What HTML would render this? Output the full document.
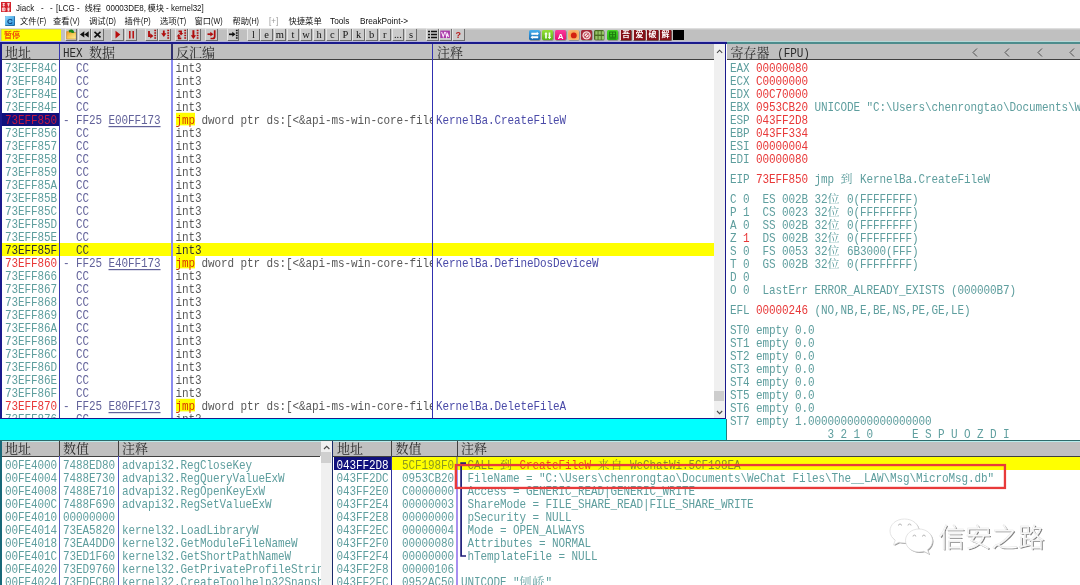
<!DOCTYPE html><html><head><meta charset="utf-8"><title>Jiack</title><style>
html,body{margin:0;padding:0;background:#fff;}
body{width:1080px;height:585px;position:relative;overflow:hidden;font-family:"Liberation Sans","Noto Sans CJK SC",sans-serif;}
#w{position:absolute;left:0;top:0;width:1080px;height:585px;overflow:hidden;will-change:transform;}
.b{position:absolute;}
.r{position:absolute;height:13px;line-height:13px;white-space:pre;font-family:"Liberation Mono","Noto Serif CJK SC",monospace;font-size:11px;letter-spacing:-0.1px;transform:translateY(1px) scaleY(1.22);transform-origin:0 50%;}
.k{display:inline-block;font-size:12px;letter-spacing:1px;transform:translateY(.6px) scaleY(.77);line-height:13px;vertical-align:baseline;}
.h{position:absolute;height:15px;line-height:15px;margin-top:1.5px;white-space:pre;font-family:"Liberation Mono","Noto Serif CJK SC",monospace;font-size:13px;color:#2a2a2a;}
.h i{font-style:normal;font-size:11px;letter-spacing:-0.1px;display:inline-block;transform:translateY(-.8px) scaleY(1.2);}
.t{position:absolute;white-space:pre;font-size:8.3px;line-height:10px;color:#000;}
.l{display:inline-block;font-size:9.2px;transform:scaleX(.87);transform-origin:0 50%;}
.btn{position:absolute;top:29px;height:11px;width:11px;background:#cacaca;border-right:1px solid #6c6c6c;border-bottom:1px solid #6c6c6c;box-shadow:-1px -1px 0 #e6e6e6;font:10.500px/12.500px "Liberation Serif",serif;overflow:hidden;text-align:center;color:#111;}
.ic{position:absolute;top:29.7px;height:10.7px;width:11.5px;box-shadow:.5px .5px 0 #666;}
u{text-decoration:underline;text-decoration-thickness:1px;text-underline-offset:1.800px;}
.j{background:linear-gradient(#ffff00,#ffff00) no-repeat 0 0/100% 10.500px;color:#d83800;}
</style></head><body><div id="w">
<svg class="b" style="left:1px;top:1.800px" width="10.200" height="10" viewBox="0 0 10.200 10"><rect width="10.200" height="10" fill="#d4222c"/><g stroke="#fbe4e4" stroke-width=".9" fill="none"><path d="M1.500 1.600h2.400M2.700 1v3.600M1.500 3.300h2.400"/><path d="M6.200 1.400h2.600M6.400 2.800h2.200M7.500 1.400v3.200"/><path d="M1.400 6h2.600v2.800h-2.600zM2.700 6v2.800"/><path d="M6.200 6.200h2.600M6.300 7.600h2.400M7.500 5.800v3.200M6.400 9h2.200"/></g></svg>
<div class="t" style="left:15.5px;top:2.5px;color:#111;font-size:8.3px;"><span class="l">Jiack</span></div>
<div class="t" style="left:41px;top:2.5px;color:#111;font-size:8.3px;"><span class="l">-</span></div>
<div class="t" style="left:50px;top:2.5px;color:#111;font-size:8.3px;"><span class="l">-</span></div>
<div class="t" style="left:56px;top:2.5px;color:#111;font-size:8.3px;"><span class="l">[LCG -</span></div>
<div class="t" style="left:84.5px;top:2.5px;color:#111;font-size:8.3px;">线程</div>
<div class="t" style="left:105.5px;top:2.5px;color:#111;font-size:8.3px;"><span class="l">00003DE8,</span></div>
<div class="t" style="left:147.5px;top:2.5px;color:#111;font-size:8.3px;">模块</div>
<div class="t" style="left:166px;top:2.5px;color:#111;font-size:8.3px;"><span class="l">- kernel32]</span></div>
<svg class="b" style="left:5px;top:16px" width="10" height="10" viewBox="0 0 10 10"><defs><linearGradient id="mg" x1="0" y1="0" x2="1" y2="1"><stop offset="0" stop-color="#8ed6f8"/><stop offset="1" stop-color="#2c94dc"/></linearGradient></defs><rect width="10" height="10" rx="1" fill="#1c5c94"/><rect width="9.300" height="9.300" rx="1" fill="url(#mg)"/><text x="5" y="8" font-size="8" font-weight="bold" text-anchor="middle" fill="#0a3a78" font-family="Liberation Sans, sans-serif">C</text></svg>
<div class="t" style="left:20px;top:16px;color:#111;font-size:8.3px;">文件<span class="l" style="transform:scaleX(0.78)">(F)</span></div>
<div class="t" style="left:53px;top:16px;color:#111;font-size:8.3px;">查看<span class="l" style="transform:scaleX(0.78)">(V)</span></div>
<div class="t" style="left:89px;top:16px;color:#111;font-size:8.3px;">调试<span class="l" style="transform:scaleX(0.78)">(D)</span></div>
<div class="t" style="left:124.5px;top:16px;color:#111;font-size:8.3px;">插件<span class="l" style="transform:scaleX(0.78)">(P)</span></div>
<div class="t" style="left:160px;top:16px;color:#111;font-size:8.3px;">选项<span class="l" style="transform:scaleX(0.78)">(T)</span></div>
<div class="t" style="left:194.5px;top:16px;color:#111;font-size:8.3px;">窗口<span class="l" style="transform:scaleX(0.78)">(W)</span></div>
<div class="t" style="left:232.5px;top:16px;color:#111;font-size:8.3px;">帮助<span class="l" style="transform:scaleX(0.78)">(H)</span></div>
<div class="t" style="left:288.5px;top:16px;color:#111;font-size:8.3px;">快捷菜单</div>
<div class="t" style="left:329.5px;top:16px;color:#111;font-size:8.3px;"><span class="l" style="transform:scaleX(0.9)">Tools</span></div>
<div class="t" style="left:359.5px;top:16px;color:#111;font-size:8.3px;"><span class="l" style="transform:scaleX(0.9)">BreakPoint-&gt;</span></div>
<div class="t" style="left:268.5px;top:16px;color:#999;font-size:8.3px;"><span class="l">[+]</span></div>
<div class="b" style="left:0px;top:28px;width:1080px;height:14.5px;background:linear-gradient(#e8e8e8,#c0c0c0 2px,#c0c0c0);"></div>
<div class="b" style="left:1px;top:29.3px;width:60px;height:12.7px;background:#ffff00;box-shadow:inset .6px .6px 0 #c8c860;"></div>
<div class="t" style="left:4px;top:30.700px;color:#f05008;font-size:8px;font-weight:bold;letter-spacing:0">暂停</div>
<div class="btn" style="left:65.5px;width:10.5px;color:#111;"><svg width="11" height="11" viewBox="0 0 11 11" style="position:absolute;left:0;top:0"><defs><linearGradient id="fg" x1="0" y1="0" x2="1" y2="1"><stop offset="0" stop-color="#f09a20"/><stop offset=".55" stop-color="#f6d060"/><stop offset="1" stop-color="#fbf0a0"/></linearGradient></defs><path d="M.6 2.600h3.400l1 1h5.200v6.400H.6z" fill="url(#fg)" stroke="#c08020" stroke-width=".5"/><path d="M2.600 1.600c1.600-1.800 4.600-1.600 5.200.6l.6 1.600-2.400.2-1-.8-1.800.2z" fill="#188418"/></svg></div>
<div class="btn" style="left:79px;width:10.5px;color:#111;"><svg width="11" height="11" viewBox="0 0 11 11" style="position:absolute;left:0;top:0"><path d="M5.300 2.200v6.400L.9 5.400zM9.700 2.200v6.400L5.300 5.400z" fill="#111"/></svg></div>
<div class="btn" style="left:92px;width:10.5px;color:#111;"><svg width="11" height="11" viewBox="0 0 11 11" style="position:absolute;left:0;top:0"><path d="M2.500 2.800l6 5.600M8.500 2.800l-6 5.600" stroke="#111" stroke-width="1.600"/></svg></div>
<div class="btn" style="left:112px;width:10.5px;color:#111;"><svg width="11" height="11" viewBox="0 0 11 11" style="position:absolute;left:0;top:0"><path d="M3.500 1.800v7.600L8.300 5.600z" fill="#b80c0c"/></svg></div>
<div class="btn" style="left:125.5px;width:10.5px;color:#111;"><svg width="11" height="11" viewBox="0 0 11 11" style="position:absolute;left:0;top:0"><path d="M3.800 2v7.400M7.200 2v7.400" stroke="#b80c0c" stroke-width="1.500"/></svg></div>
<div class="btn" style="left:146px;width:10.5px;color:#111;"><svg width="11" height="11" viewBox="0 0 11 11" style="position:absolute;left:0;top:0"><path d="M9.200 .8v10" stroke="#b00c0c" stroke-width="1.800" stroke-dasharray="1.500 1"/><path d="M3 2v5h1.500" stroke="#b00c0c" stroke-width="1.800" fill="none"/><path d="M4.200 4.300l3.200 2.600-3.200 2.600z" fill="#b00c0c"/></svg></div>
<div class="btn" style="left:159px;width:10.5px;color:#111;"><svg width="11" height="11" viewBox="0 0 11 11" style="position:absolute;left:0;top:0"><path d="M9.200 .8v10" stroke="#b00c0c" stroke-width="1.800" stroke-dasharray="1.500 1"/><path d="M4.800 1.500v4" stroke="#b00c0c" stroke-width="1.800"/><path d="M2.200 4.300h5.200L4.800 8z" fill="#b00c0c"/></svg></div>
<div class="btn" style="left:176px;width:10.5px;color:#111;"><svg width="11" height="11" viewBox="0 0 11 11" style="position:absolute;left:0;top:0"><path d="M9.200 .8v10" stroke="#b00c0c" stroke-width="1.800" stroke-dasharray="1.500 1"/><path d="M2.500 2.300h2.600v2.200M5.300 9.300h-2.600v-2" stroke="#b00c0c" stroke-width="1.700" fill="none"/><path d="M3 4h4.200L5.100 6.600z" fill="#b00c0c"/><path d="M.6 7.600h4.200L2.700 5z" fill="#b00c0c"/></svg></div>
<div class="btn" style="left:189.2px;width:10.5px;color:#111;"><svg width="11" height="11" viewBox="0 0 11 11" style="position:absolute;left:0;top:0"><path d="M8.600 .8v10" stroke="#b00c0c" stroke-width="1.800" stroke-dasharray="1.500 1"/><path d="M4.400 1.200v6.500" stroke="#b00c0c" stroke-width="2"/><path d="M1.800 6.300h5.200L4.400 10z" fill="#b00c0c"/></svg></div>
<div class="btn" style="left:206px;width:10.5px;color:#111;"><svg width="11" height="11" viewBox="0 0 11 11" style="position:absolute;left:0;top:0"><path d="M8.700 1.200v6.300q0 2-2 2h-2.200" stroke="#b00c0c" stroke-width="1.700" fill="none"/><path d="M1.500 5.200h3.500" stroke="#b00c0c" stroke-width="1.700"/><path d="M4.300 2.800l3.200 2.400-3.200 2.400z" fill="#b00c0c"/></svg></div>
<div class="btn" style="left:227.7px;width:10.5px;color:#111;"><svg width="11" height="11" viewBox="0 0 11 11" style="position:absolute;left:0;top:0"><path d="M8.800 .8v10" stroke="#111" stroke-width="1.800" stroke-dasharray="1.500 1"/><path d="M1 5.300h4" stroke="#111" stroke-width="1.700"/><path d="M4.300 2.800l3.200 2.500-3.200 2.500z" fill="#111"/></svg></div>
<div class="btn" style="left:248.3px;width:10.5px;color:#111;">l</div>
<div class="btn" style="left:261.42px;width:10.5px;color:#111;">e</div>
<div class="btn" style="left:274.54px;width:10.5px;color:#111;">m</div>
<div class="btn" style="left:287.66px;width:10.5px;color:#111;">t</div>
<div class="btn" style="left:300.78000000000003px;width:10.5px;color:#111;">w</div>
<div class="btn" style="left:313.9px;width:10.5px;color:#111;">h</div>
<div class="btn" style="left:327.02px;width:10.5px;color:#111;">c</div>
<div class="btn" style="left:340.14px;width:10.5px;color:#111;">P</div>
<div class="btn" style="left:353.26px;width:10.5px;color:#111;">k</div>
<div class="btn" style="left:366.38px;width:10.5px;color:#111;">b</div>
<div class="btn" style="left:379.5px;width:10.5px;color:#111;">r</div>
<div class="btn" style="left:392.62px;width:10.5px;color:#111;">...</div>
<div class="btn" style="left:405.74px;width:10.5px;color:#111;">s</div>
<div class="btn" style="left:427px;width:10.5px;color:#111;"><svg width="11" height="11" viewBox="0 0 11 11" style="position:absolute;left:0;top:0"><path d="M1 2.500h2M1 5.500h2M1 8.500h2" stroke="#111" stroke-width="1.600"/><path d="M4 2.500h6M4 5.500h6M4 8.500h6" stroke="#111" stroke-width="1.400"/></svg></div>
<div class="btn" style="left:440px;width:10.5px;color:#111;"><svg width="11" height="11" viewBox="0 0 11 11" style="position:absolute;left:0;top:0"><rect x=".3" y="1.600" width="9.600" height="7.400" fill="#a838a8"/><path d="M1.600 2.800l1.600 5L4.800 2.800M5.600 2.800l1 5 1-3 1 3" stroke="#fbe8fb" stroke-width="1.100" fill="none"/></svg></div>
<div class="btn" style="left:453px;width:10.5px;color:#b81818;font:bold 9px/13px 'Liberation Sans',sans-serif;">?</div>
<div class="ic" style="left:528.5px;width:11.2px;background:linear-gradient(#48b0f0,#1468b0);border-radius:1.5px;"><svg width="11.500" height="11" viewBox="0 0 11.500 11" style="position:absolute;left:0;top:0"><path d="M2.300 3.700h6M3.200 7.300h6" stroke="#fff" stroke-width="1.900"/><path d="M7.800 1.800l2.200 1.900-2.200 1.900zM3.700 5.400L1.500 7.300l2.200 1.900z" fill="#fff"/></svg></div>
<div class="ic" style="left:541.5px;width:11.2px;background:linear-gradient(#98e038,#58b414);border-radius:1.5px;"><svg width="11.500" height="11" viewBox="0 0 11.500 11" style="position:absolute;left:0;top:0"><path d="M4 3v5.500M7.500 2.500v5.500" stroke="#f4fff0" stroke-width="1.700"/><path d="M2.300 4.200L4 2l1.700 2.200zM5.800 7L7.500 9.200 9.200 7z" fill="#f4fff0"/></svg></div>
<div class="ic" style="left:554.7px;width:11.2px;background:linear-gradient(#fa3c9c,#e40c74);border-radius:1.5px;"><svg width="11.500" height="11" viewBox="0 0 11.500 11" style="position:absolute;left:0;top:0"><text x="5.600" y="8.600" font-size="8" font-weight="bold" text-anchor="middle" fill="#fff" font-family="Liberation Sans, sans-serif">A</text></svg></div>
<div class="ic" style="left:567.7px;width:11.6px;background:radial-gradient(#f49030,#f8c488);border-radius:1.5px;"><svg width="11.500" height="11" viewBox="0 0 11.500 11" style="position:absolute;left:0;top:0"><circle cx="5.800" cy="5.400" r="2.900" fill="#d42010"/></svg></div>
<div class="ic" style="left:581px;width:11.2px;background:#a42838;border-radius:1.5px;"><svg width="11.500" height="11" viewBox="0 0 11.500 11" style="position:absolute;left:0;top:0"><circle cx="5.600" cy="5.400" r="4.200" fill="#f6dcdc"/><circle cx="5.600" cy="5.400" r="2.500" fill="none" stroke="#b83040" stroke-width=".8"/><path d="M3.900 7.100l3.400-3.400" stroke="#b83040" stroke-width=".8"/></svg></div>
<div class="ic" style="left:593.5px;width:10.8px;background:#4a6a22;border-radius:1.5px;"><svg width="11.500" height="11" viewBox="0 0 11.500 11" style="position:absolute;left:0;top:0"><g fill="#96c468"><rect x="1.300" y="1.200" width="2.300" height="3.400"/><rect x="4.500" y="1.200" width="2.300" height="3.400"/><rect x="7.700" y="1.200" width="2.300" height="3.400"/><rect x="1.300" y="6" width="2.300" height="3.600"/><rect x="4.500" y="6" width="2.300" height="3.600"/><rect x="7.700" y="6" width="2.300" height="3.600"/></g></svg></div>
<div class="ic" style="left:606.8px;width:11px;background:linear-gradient(#48d828,#28b414);border-radius:1.5px;"><svg width="11.500" height="11" viewBox="0 0 11.500 11" style="position:absolute;left:0;top:0"><rect x="2.600" y="2" width="6" height="5.200" fill="none" stroke="#1c7410" stroke-width="1"/><path d="M5.600 2v5.200M2.600 4.600h6M2.300 8.800h6.600" stroke="#1c7410" stroke-width=".9"/></svg></div>
<div class="ic" style="left:619.6px;width:10.600px;background:#861018;border-left:1px solid #f0d8d8;color:#fff;font:bold 8px/10.700px 'Liberation Sans','Noto Sans CJK SC',sans-serif;text-align:center;overflow:hidden;box-shadow:.6px .6px 0 #400808;">吾</div>
<div class="ic" style="left:633.1px;width:10.600px;background:#861018;border-left:1px solid #f0d8d8;color:#fff;font:bold 8px/10.700px 'Liberation Sans','Noto Sans CJK SC',sans-serif;text-align:center;overflow:hidden;box-shadow:.6px .6px 0 #400808;">爱</div>
<div class="ic" style="left:646.2px;width:10.600px;background:#861018;border-left:1px solid #f0d8d8;color:#fff;font:bold 8px/10.700px 'Liberation Sans','Noto Sans CJK SC',sans-serif;text-align:center;overflow:hidden;box-shadow:.6px .6px 0 #400808;">破</div>
<div class="ic" style="left:659.2px;width:10.600px;background:#861018;border-left:1px solid #f0d8d8;color:#fff;font:bold 8px/10.700px 'Liberation Sans','Noto Sans CJK SC',sans-serif;text-align:center;overflow:hidden;box-shadow:.6px .6px 0 #400808;">解</div>
<div class="ic" style="left:673.100px;width:10.800px;background:#000;box-shadow:none"></div>
<div class="b" style="left:0px;top:41.3px;width:726px;height:1px;background:#b4b4dc;"></div>
<div class="b" style="left:0px;top:42.1px;width:726.5px;height:1.9px;background:#1a1a8c;"></div>
<div class="b" style="left:0px;top:42.5px;width:2px;height:400px;background:#1a1a8c;"></div>
<div class="b" style="left:2px;top:44px;width:712px;height:15px;background:#c0c0c0;"></div>
<div class="b" style="left:2px;top:58.5px;width:712px;height:1.5px;background:#404040;"></div>
<div class="h" style="left:5px;top:44px">地址</div>
<div class="h" style="left:63px;top:44px"><i>HEX </i>数据</div>
<div class="h" style="left:176px;top:44px">反汇编</div>
<div class="h" style="left:437px;top:44px">注释</div>
<div class="b" style="left:714px;top:44px;width:11px;height:374.5px;background:#f0f0f0;"></div>
<div class="b" style="left:714px;top:44px;width:11px;height:15px;background:#f0f0f0;"></div>
<svg class="b" style="left:714px;top:44px" width="11" height="15" viewBox="0 0 11 15"><path d="M3 8.800L5.600 6.200 8.200 8.800" stroke="#484848" stroke-width="1.100" fill="none"/></svg>
<svg class="b" style="left:714px;top:405px" width="11" height="13" viewBox="0 0 11 13"><path d="M3 6L5.600 8.600 8.200 6" stroke="#484848" stroke-width="1.100" fill="none"/></svg>
<div class="b" style="left:714.3px;top:391.2px;width:9.8px;height:10.3px;background:#cdcdcd;"></div>
<div class="b" style="left:724.6px;top:42.5px;width:1.8px;height:376px;background:#1a1a8c;"></div>
<div class="b" style="left:2px;top:60px;width:712px;height:358.500px;overflow:hidden">
<div class="r" style="left:3px;top:1px;color:#5e9e9e;">73EFF84C</div>
<div class="r" style="left:61px;top:1px;color:#62629a;">  CC</div>
<div class="r" style="left:173.5px;top:1px;color:#585858;">int3</div>
<div class="r" style="left:3px;top:14px;color:#5e9e9e;">73EFF84D</div>
<div class="r" style="left:61px;top:14px;color:#62629a;">  CC</div>
<div class="r" style="left:173.5px;top:14px;color:#585858;">int3</div>
<div class="r" style="left:3px;top:27px;color:#5e9e9e;">73EFF84E</div>
<div class="r" style="left:61px;top:27px;color:#62629a;">  CC</div>
<div class="r" style="left:173.5px;top:27px;color:#585858;">int3</div>
<div class="r" style="left:3px;top:40px;color:#5e9e9e;">73EFF84F</div>
<div class="r" style="left:61px;top:40px;color:#62629a;">  CC</div>
<div class="r" style="left:173.5px;top:40px;color:#585858;">int3</div>
<div class="b" style="left:0;top:53px;width:57px;height:13px;background:#10107c"></div>
<div class="r" style="left:3px;top:53px;color:#c01840;">73EFF850</div>
<div class="r" style="left:61px;top:53px;color:#62629a;">- FF25 <u>E00FF173</u></div>
<div class="r" style="left:173.5px;top:53px;color:#585858;width:256px;overflow:hidden;"><span class="j">jmp</span> dword ptr ds:[&lt;&amp;api-ms-win-core-file</div>
<div class="r" style="left:434px;top:53px;color:#4a4aa8;">KernelBa.CreateFileW</div>
<div class="r" style="left:3px;top:66px;color:#5e9e9e;">73EFF856</div>
<div class="r" style="left:61px;top:66px;color:#62629a;">  CC</div>
<div class="r" style="left:173.5px;top:66px;color:#585858;">int3</div>
<div class="r" style="left:3px;top:79px;color:#5e9e9e;">73EFF857</div>
<div class="r" style="left:61px;top:79px;color:#62629a;">  CC</div>
<div class="r" style="left:173.5px;top:79px;color:#585858;">int3</div>
<div class="r" style="left:3px;top:92px;color:#5e9e9e;">73EFF858</div>
<div class="r" style="left:61px;top:92px;color:#62629a;">  CC</div>
<div class="r" style="left:173.5px;top:92px;color:#585858;">int3</div>
<div class="r" style="left:3px;top:105px;color:#5e9e9e;">73EFF859</div>
<div class="r" style="left:61px;top:105px;color:#62629a;">  CC</div>
<div class="r" style="left:173.5px;top:105px;color:#585858;">int3</div>
<div class="r" style="left:3px;top:118px;color:#5e9e9e;">73EFF85A</div>
<div class="r" style="left:61px;top:118px;color:#62629a;">  CC</div>
<div class="r" style="left:173.5px;top:118px;color:#585858;">int3</div>
<div class="r" style="left:3px;top:131px;color:#5e9e9e;">73EFF85B</div>
<div class="r" style="left:61px;top:131px;color:#62629a;">  CC</div>
<div class="r" style="left:173.5px;top:131px;color:#585858;">int3</div>
<div class="r" style="left:3px;top:144px;color:#5e9e9e;">73EFF85C</div>
<div class="r" style="left:61px;top:144px;color:#62629a;">  CC</div>
<div class="r" style="left:173.5px;top:144px;color:#585858;">int3</div>
<div class="r" style="left:3px;top:157px;color:#5e9e9e;">73EFF85D</div>
<div class="r" style="left:61px;top:157px;color:#62629a;">  CC</div>
<div class="r" style="left:173.5px;top:157px;color:#585858;">int3</div>
<div class="r" style="left:3px;top:170px;color:#5e9e9e;">73EFF85E</div>
<div class="r" style="left:61px;top:170px;color:#62629a;">  CC</div>
<div class="r" style="left:173.5px;top:170px;color:#585858;">int3</div>
<div class="b" style="left:0;top:183px;width:712px;height:13px;background:#ffff00"></div>
<div class="r" style="left:3px;top:183px;color:#303030;">73EFF85F</div>
<div class="r" style="left:61px;top:183px;color:#404040;">  CC</div>
<div class="r" style="left:173.5px;top:183px;color:#303030;">int3</div>
<div class="r" style="left:3px;top:196px;color:#e83838;">73EFF860</div>
<div class="r" style="left:61px;top:196px;color:#62629a;">- FF25 <u>E40FF173</u></div>
<div class="r" style="left:173.5px;top:196px;color:#585858;width:256px;overflow:hidden;"><span class="j">jmp</span> dword ptr ds:[&lt;&amp;api-ms-win-core-file</div>
<div class="r" style="left:434px;top:196px;color:#4a4aa8;">KernelBa.DefineDosDeviceW</div>
<div class="r" style="left:3px;top:209px;color:#5e9e9e;">73EFF866</div>
<div class="r" style="left:61px;top:209px;color:#62629a;">  CC</div>
<div class="r" style="left:173.5px;top:209px;color:#585858;">int3</div>
<div class="r" style="left:3px;top:222px;color:#5e9e9e;">73EFF867</div>
<div class="r" style="left:61px;top:222px;color:#62629a;">  CC</div>
<div class="r" style="left:173.5px;top:222px;color:#585858;">int3</div>
<div class="r" style="left:3px;top:235px;color:#5e9e9e;">73EFF868</div>
<div class="r" style="left:61px;top:235px;color:#62629a;">  CC</div>
<div class="r" style="left:173.5px;top:235px;color:#585858;">int3</div>
<div class="r" style="left:3px;top:248px;color:#5e9e9e;">73EFF869</div>
<div class="r" style="left:61px;top:248px;color:#62629a;">  CC</div>
<div class="r" style="left:173.5px;top:248px;color:#585858;">int3</div>
<div class="r" style="left:3px;top:261px;color:#5e9e9e;">73EFF86A</div>
<div class="r" style="left:61px;top:261px;color:#62629a;">  CC</div>
<div class="r" style="left:173.5px;top:261px;color:#585858;">int3</div>
<div class="r" style="left:3px;top:274px;color:#5e9e9e;">73EFF86B</div>
<div class="r" style="left:61px;top:274px;color:#62629a;">  CC</div>
<div class="r" style="left:173.5px;top:274px;color:#585858;">int3</div>
<div class="r" style="left:3px;top:287px;color:#5e9e9e;">73EFF86C</div>
<div class="r" style="left:61px;top:287px;color:#62629a;">  CC</div>
<div class="r" style="left:173.5px;top:287px;color:#585858;">int3</div>
<div class="r" style="left:3px;top:300px;color:#5e9e9e;">73EFF86D</div>
<div class="r" style="left:61px;top:300px;color:#62629a;">  CC</div>
<div class="r" style="left:173.5px;top:300px;color:#585858;">int3</div>
<div class="r" style="left:3px;top:313px;color:#5e9e9e;">73EFF86E</div>
<div class="r" style="left:61px;top:313px;color:#62629a;">  CC</div>
<div class="r" style="left:173.5px;top:313px;color:#585858;">int3</div>
<div class="r" style="left:3px;top:326px;color:#5e9e9e;">73EFF86F</div>
<div class="r" style="left:61px;top:326px;color:#62629a;">  CC</div>
<div class="r" style="left:173.5px;top:326px;color:#585858;">int3</div>
<div class="r" style="left:3px;top:339px;color:#e83838;">73EFF870</div>
<div class="r" style="left:61px;top:339px;color:#62629a;">- FF25 <u>E80FF173</u></div>
<div class="r" style="left:173.5px;top:339px;color:#585858;width:256px;overflow:hidden;"><span class="j">jmp</span> dword ptr ds:[&lt;&amp;api-ms-win-core-file</div>
<div class="r" style="left:434px;top:339px;color:#4a4aa8;">KernelBa.DeleteFileA</div>
<div class="r" style="left:3px;top:352px;color:#5e9e9e;">73EFF876</div>
<div class="r" style="left:61px;top:352px;color:#62629a;">  CC</div>
<div class="r" style="left:173.5px;top:352px;color:#585858;">int3</div>
</div>
<div class="b" style="left:59px;top:44px;width:1px;height:374.5px;background:#3838b0;"></div>
<div class="b" style="left:171px;top:60px;width:1.5px;height:358.5px;background:#8c8cf0;"></div>
<div class="b" style="left:171px;top:44px;width:1.5px;height:16px;background:#303070;"></div>
<div class="b" style="left:432px;top:44px;width:1px;height:374.5px;background:#3030b0;"></div>
<div class="b" style="left:0px;top:418.2px;width:726px;height:1.3px;background:#1a1a8c;"></div>
<div class="b" style="left:0px;top:419.3px;width:725.5px;height:21px;background:#00ffff;"></div>
<div class="b" style="left:725.5px;top:419.3px;width:0.7px;height:21px;background:#208080;"></div>
<div class="b" style="left:726.5px;top:41.2px;width:353.5px;height:1px;background:#b4d8d8;"></div>
<div class="b" style="left:726.5px;top:42.2px;width:353.5px;height:2px;background:#4c8c8c;"></div>
<div class="b" style="left:726.5px;top:44.2px;width:353.5px;height:1px;background:#b4cccc;"></div>
<div class="b" style="left:727px;top:44px;width:353px;height:15px;background:#c0c0c0;"></div>
<div class="b" style="left:727px;top:58.5px;width:353px;height:1.5px;background:#404040;"></div>
<div class="h" style="left:730.5px;top:44px">寄存器 <i>(FPU)</i></div>
<svg class="b" style="left:970.5px;top:47px" width="8" height="11" viewBox="0 0 8 11"><path d="M6 1.500L2 5.500 6 9.500" stroke="#505050" stroke-width="1" fill="none"/></svg>
<svg class="b" style="left:1003px;top:47px" width="8" height="11" viewBox="0 0 8 11"><path d="M6 1.500L2 5.500 6 9.500" stroke="#505050" stroke-width="1" fill="none"/></svg>
<svg class="b" style="left:1035.5px;top:47px" width="8" height="11" viewBox="0 0 8 11"><path d="M6 1.500L2 5.500 6 9.500" stroke="#505050" stroke-width="1" fill="none"/></svg>
<svg class="b" style="left:1068px;top:47px" width="8" height="11" viewBox="0 0 8 11"><path d="M6 1.500L2 5.500 6 9.500" stroke="#505050" stroke-width="1" fill="none"/></svg>
<div class="b" style="left:0;top:0;width:1080px;height:440px;overflow:hidden">
<div class="r" style="left:730px;top:61px;"><span style="color:#5e9e9e">EAX </span><span style="color:#e83838">00000080</span><span style="color:#5e9e9e"></span></div>
<div class="r" style="left:730px;top:74px;"><span style="color:#5e9e9e">ECX </span><span style="color:#e83838">C0000000</span><span style="color:#5e9e9e"></span></div>
<div class="r" style="left:730px;top:87px;"><span style="color:#5e9e9e">EDX </span><span style="color:#e83838">00C70000</span><span style="color:#5e9e9e"></span></div>
<div class="r" style="left:730px;top:100px;"><span style="color:#5e9e9e">EBX </span><span style="color:#e83838">0953CB20</span><span style="color:#5e9e9e"> UNICODE "C:\Users\chenrongtao\Documents\W</span></div>
<div class="r" style="left:730px;top:113px;"><span style="color:#5e9e9e">ESP </span><span style="color:#e83838">043FF2D8</span><span style="color:#5e9e9e"></span></div>
<div class="r" style="left:730px;top:126px;"><span style="color:#5e9e9e">EBP </span><span style="color:#e83838">043FF334</span><span style="color:#5e9e9e"></span></div>
<div class="r" style="left:730px;top:139px;"><span style="color:#5e9e9e">ESI </span><span style="color:#e83838">00000004</span><span style="color:#5e9e9e"></span></div>
<div class="r" style="left:730px;top:152px;"><span style="color:#5e9e9e">EDI </span><span style="color:#e83838">00000080</span><span style="color:#5e9e9e"></span></div>
<div class="r" style="left:730px;top:172px;"><span style="color:#5e9e9e">EIP </span><span style="color:#e83838">73EFF850</span><span style="color:#5e9e9e"> jmp <span class="k">到</span> KernelBa.CreateFileW</span></div>
<div class="r" style="left:730px;top:192px;"><span style="color:#5e9e9e">C </span><span style="color:#5e9e9e">0</span><span style="color:#5e9e9e">  ES 002B 32<span class="k">位</span> 0(FFFFFFFF)</span></div>
<div class="r" style="left:730px;top:205px;"><span style="color:#5e9e9e">P </span><span style="color:#5e9e9e">1</span><span style="color:#5e9e9e">  CS 0023 32<span class="k">位</span> 0(FFFFFFFF)</span></div>
<div class="r" style="left:730px;top:218px;"><span style="color:#5e9e9e">A </span><span style="color:#5e9e9e">0</span><span style="color:#5e9e9e">  SS 002B 32<span class="k">位</span> 0(FFFFFFFF)</span></div>
<div class="r" style="left:730px;top:231px;"><span style="color:#5e9e9e">Z </span><span style="color:#e83838">1</span><span style="color:#5e9e9e">  DS 002B 32<span class="k">位</span> 0(FFFFFFFF)</span></div>
<div class="r" style="left:730px;top:244px;"><span style="color:#5e9e9e">S </span><span style="color:#5e9e9e">0</span><span style="color:#5e9e9e">  FS 0053 32<span class="k">位</span> 6B3000(FFF)</span></div>
<div class="r" style="left:730px;top:257px;"><span style="color:#5e9e9e">T </span><span style="color:#5e9e9e">0</span><span style="color:#5e9e9e">  GS 002B 32<span class="k">位</span> 0(FFFFFFFF)</span></div>
<div class="r" style="left:730px;top:270px;"><span style="color:#5e9e9e">D </span><span style="color:#5e9e9e">0</span></div>
<div class="r" style="left:730px;top:283px;"><span style="color:#5e9e9e">O </span><span style="color:#5e9e9e">0</span><span style="color:#5e9e9e">  LastErr ERROR_ALREADY_EXISTS (000000B7)</span></div>
<div class="r" style="left:730px;top:303px;"><span style="color:#5e9e9e">EFL </span><span style="color:#e83838">00000246</span><span style="color:#5e9e9e"> (NO,NB,E,BE,NS,PE,GE,LE)</span></div>
<div class="r" style="left:730px;top:323px;"><span style="color:#5e9e9e">ST0 empty 0.0</span></div>
<div class="r" style="left:730px;top:336px;"><span style="color:#5e9e9e">ST1 empty 0.0</span></div>
<div class="r" style="left:730px;top:349px;"><span style="color:#5e9e9e">ST2 empty 0.0</span></div>
<div class="r" style="left:730px;top:362px;"><span style="color:#5e9e9e">ST3 empty 0.0</span></div>
<div class="r" style="left:730px;top:375px;"><span style="color:#5e9e9e">ST4 empty 0.0</span></div>
<div class="r" style="left:730px;top:388px;"><span style="color:#5e9e9e">ST5 empty 0.0</span></div>
<div class="r" style="left:730px;top:401px;"><span style="color:#5e9e9e">ST6 empty 0.0</span></div>
<div class="r" style="left:730px;top:414px;"><span style="color:#5e9e9e">ST7 empty 1.0000000000000000000</span></div>
<div class="r" style="left:730px;top:427px;"><span style="color:#5e9e9e">               3 2 1 0      E S P U O Z D I</span></div>
</div>
<div class="b" style="left:0px;top:439.7px;width:1080px;height:1.3px;background:#2c6c6c;"></div>
<div class="b" style="left:0px;top:441px;width:1080px;height:15px;background:#c0c0c0;"></div>
<div class="b" style="left:0px;top:441px;width:1080px;height:0.8px;background:#b8ecec;"></div>
<div class="b" style="left:0px;top:455.5px;width:320px;height:1.5px;background:#404040;"></div>
<div class="b" style="left:333px;top:455.5px;width:747px;height:1.5px;background:#404040;"></div>
<div class="b" style="left:0px;top:441px;width:1.7px;height:145px;background:#186878;"></div>
<div class="b" style="left:59px;top:440.5px;width:1px;height:145px;background:#5858c8;"></div>
<div class="b" style="left:118px;top:440.5px;width:1.3px;height:145px;background:#5050c0;"></div>
<div class="b" style="left:59px;top:441px;width:1.2px;height:15px;background:#404040;"></div>
<div class="b" style="left:118px;top:441px;width:1.2px;height:15px;background:#404040;"></div>
<div class="h" style="left:5px;top:440.5px">地址</div>
<div class="h" style="left:63px;top:440.5px">数值</div>
<div class="h" style="left:122px;top:440.5px">注释</div>
<div class="b" style="left:320.5px;top:440.5px;width:11.5px;height:145px;background:#f0f0f0;"></div>
<svg class="b" style="left:320.500px;top:440.5px" width="11" height="12" viewBox="0 0 11 12"><path d="M3 8L5.700 5.300 8.400 8" stroke="#484848" stroke-width="1.100" fill="none"/></svg>
<div class="b" style="left:321.1px;top:452.2px;width:10px;height:10.5px;background:#d0d0d0;"></div>
<div class="b" style="left:0;top:0;width:320.500px;height:585px;overflow:hidden">
<div class="r " style="left:5px;top:457.7px;color:#5e9e9e;">00FE4000</div>
<div class="r " style="left:63px;top:457.7px;color:#5e9e9e;">7488ED80</div>
<div class="r " style="left:122px;top:457.7px;color:#5e9e9e;">advapi32.RegCloseKey</div>
<div class="r " style="left:5px;top:470.7px;color:#5e9e9e;">00FE4004</div>
<div class="r " style="left:63px;top:470.7px;color:#5e9e9e;">7488E730</div>
<div class="r " style="left:122px;top:470.7px;color:#5e9e9e;">advapi32.RegQueryValueExW</div>
<div class="r " style="left:5px;top:483.7px;color:#5e9e9e;">00FE4008</div>
<div class="r " style="left:63px;top:483.7px;color:#5e9e9e;">7488E710</div>
<div class="r " style="left:122px;top:483.7px;color:#5e9e9e;">advapi32.RegOpenKeyExW</div>
<div class="r " style="left:5px;top:496.7px;color:#5e9e9e;">00FE400C</div>
<div class="r " style="left:63px;top:496.7px;color:#5e9e9e;">7488F690</div>
<div class="r " style="left:122px;top:496.7px;color:#5e9e9e;">advapi32.RegSetValueExW</div>
<div class="r " style="left:5px;top:509.7px;color:#5e9e9e;">00FE4010</div>
<div class="r " style="left:63px;top:509.7px;color:#5e9e9e;">00000000</div>
<div class="r " style="left:5px;top:522.7px;color:#5e9e9e;">00FE4014</div>
<div class="r " style="left:63px;top:522.7px;color:#5e9e9e;">73EA5820</div>
<div class="r " style="left:122px;top:522.7px;color:#5e9e9e;">kernel32.LoadLibraryW</div>
<div class="r " style="left:5px;top:535.7px;color:#5e9e9e;">00FE4018</div>
<div class="r " style="left:63px;top:535.7px;color:#5e9e9e;">73EA4DD0</div>
<div class="r " style="left:122px;top:535.7px;color:#5e9e9e;">kernel32.GetModuleFileNameW</div>
<div class="r " style="left:5px;top:548.7px;color:#5e9e9e;">00FE401C</div>
<div class="r " style="left:63px;top:548.7px;color:#5e9e9e;">73ED1F60</div>
<div class="r " style="left:122px;top:548.7px;color:#5e9e9e;">kernel32.GetShortPathNameW</div>
<div class="r " style="left:5px;top:561.7px;color:#5e9e9e;">00FE4020</div>
<div class="r " style="left:63px;top:561.7px;color:#5e9e9e;">73ED9760</div>
<div class="r " style="left:122px;top:561.7px;color:#5e9e9e;">kernel32.GetPrivateProfileStringW</div>
<div class="r " style="left:5px;top:574.7px;color:#5e9e9e;">00FE4024</div>
<div class="r " style="left:63px;top:574.7px;color:#5e9e9e;">73EDFCB0</div>
<div class="r " style="left:122px;top:574.7px;color:#5e9e9e;">kernel32.CreateToolhelp32Snapshot</div>
</div>
<div class="b" style="left:332px;top:441px;width:1.2px;height:145px;background:#182868;"></div>
<div class="b" style="left:391px;top:440.5px;width:1px;height:145px;background:#3030a0;"></div>
<div class="b" style="left:456.4px;top:456.5px;width:1.5px;height:129px;background:#a890f0;"></div>
<div class="b" style="left:391px;top:441px;width:1.2px;height:15px;background:#404040;"></div>
<div class="b" style="left:456.5px;top:441px;width:1.2px;height:15px;background:#404040;"></div>
<div class="h" style="left:337px;top:440.5px">地址</div>
<div class="h" style="left:395.5px;top:440.5px">数值</div>
<div class="h" style="left:461px;top:440.5px">注释</div>
<div class="b" style="left:333.5px;top:457px;width:57.5px;height:13px;background:#10107c;"></div>
<div class="b" style="left:392px;top:457px;width:688px;height:13px;background:#ffff00;"></div>
<div class="b" style="left:456.4px;top:457px;width:1.5px;height:13px;background:#a8a860;"></div>
<div class="r " style="left:336.5px;top:457.7px;color:#ffffff;">043FF2D8</div>
<div class="r " style="left:395.5px;top:457.7px;color:#8c9820;"> 5CF198F0</div>
<div class="r" style="left:461px;top:457.7px;color:#8a8a28"> CALL <span class="k">到</span> <span style="color:#f04818">CreateFileW</span> <span class="k">来自</span> WeChatWi.5CF198EA</div>
<div class="r " style="left:336.5px;top:470.7px;color:#5e9e9e;">043FF2DC</div>
<div class="r " style="left:395.5px;top:470.7px;color:#5e9e9e;"> 0953CB20</div>
<div class="r " style="left:461px;top:470.7px;color:#5e9e9e;"> FileName = "C:\Users\chenrongtao\Documents\WeChat Files\The__LAW\Msg\MicroMsg.db"</div>
<div class="r " style="left:336.5px;top:483.7px;color:#5e9e9e;">043FF2E0</div>
<div class="r " style="left:395.5px;top:483.7px;color:#5e9e9e;"> C0000000</div>
<div class="r " style="left:461px;top:483.7px;color:#5e9e9e;"> Access = GENERIC_READ|GENERIC_WRITE</div>
<div class="r " style="left:336.5px;top:496.7px;color:#5e9e9e;">043FF2E4</div>
<div class="r " style="left:395.5px;top:496.7px;color:#5e9e9e;"> 00000003</div>
<div class="r " style="left:461px;top:496.7px;color:#5e9e9e;"> ShareMode = FILE_SHARE_READ|FILE_SHARE_WRITE</div>
<div class="r " style="left:336.5px;top:509.7px;color:#5e9e9e;">043FF2E8</div>
<div class="r " style="left:395.5px;top:509.7px;color:#5e9e9e;"> 00000000</div>
<div class="r " style="left:461px;top:509.7px;color:#5e9e9e;"> pSecurity = NULL</div>
<div class="r " style="left:336.5px;top:522.7px;color:#5e9e9e;">043FF2EC</div>
<div class="r " style="left:395.5px;top:522.7px;color:#5e9e9e;"> 00000004</div>
<div class="r " style="left:461px;top:522.7px;color:#5e9e9e;"> Mode = OPEN_ALWAYS</div>
<div class="r " style="left:336.5px;top:535.7px;color:#5e9e9e;">043FF2F0</div>
<div class="r " style="left:395.5px;top:535.7px;color:#5e9e9e;"> 00000080</div>
<div class="r " style="left:461px;top:535.7px;color:#5e9e9e;"> Attributes = NORMAL</div>
<div class="r " style="left:336.5px;top:548.7px;color:#5e9e9e;">043FF2F4</div>
<div class="r " style="left:395.5px;top:548.7px;color:#5e9e9e;"> 00000000</div>
<div class="r " style="left:461px;top:548.7px;color:#5e9e9e;"> hTemplateFile = NULL</div>
<div class="r " style="left:336.5px;top:561.7px;color:#5e9e9e;">043FF2F8</div>
<div class="r " style="left:395.5px;top:561.7px;color:#5e9e9e;"> 00000106</div>
<div class="r " style="left:336.5px;top:574.7px;color:#5e9e9e;">043FF2FC</div>
<div class="r " style="left:395.5px;top:574.7px;color:#5e9e9e;"> 0952AC50</div>
<div class="r " style="left:461px;top:574.7px;color:#5e9e9e;">UNICODE "<span class="k">刨峤</span>"</div>
<svg class="b" style="left:455px;top:457px" width="14" height="105" viewBox="0 0 14 105"><path d="M11 6.100H6.100V99H11" stroke="#1c1c78" stroke-width="1.700" fill="none"/></svg>
<svg class="b" style="left:450px;top:460px" width="560" height="34" viewBox="0 0 560 34"><rect x="5.850" y="5.050" width="549.100" height="22.900" fill="none" stroke="#e83a3a" stroke-width="2.300"/></svg>
<svg class="b" style="left:885px;top:512px" width="170" height="50" viewBox="0 0 170 50"><path d="M19.500 7C11 7 5 12.500 5 19c0 3.800 2 7 5.200 9.200L8.500 33l5.500-2.800c1.700.5 3.500.8 5.500.8 8.500 0 14.500-5.500 14.500-12S28 7 19.500 7z" fill="#9a9a9a" transform="translate(1,1)"/><path d="M19.500 7C11 7 5 12.500 5 19c0 3.800 2 7 5.200 9.200L8.500 33l5.500-2.800c1.700.5 3.500.8 5.500.8 8.500 0 14.500-5.500 14.500-12S28 7 19.500 7z" fill="#fff" stroke="#dadada" stroke-width=".7"/><path d="M34 17c-7.500 0-13.500 5-13.500 11.500S26.500 40 34 40c1.700 0 3.300-.3 4.800-.7L44 42l-1.500-4.300c3-2.100 5-5.200 5-9.200C47.500 22 41.500 17 34 17z" fill="#9a9a9a" transform="translate(1,1)"/><path d="M34 17c-7.500 0-13.500 5-13.500 11.500S26.500 40 34 40c1.700 0 3.300-.3 4.800-.7L44 42l-1.500-4.300c3-2.100 5-5.200 5-9.200C47.500 22 41.500 17 34 17z" fill="#fff" stroke="#dadada" stroke-width=".7"/><g fill="none" stroke="#b4b4b4" stroke-width="1"><path d="M13.500 13.500a1.500 1.500 0 0 1 3 0M23 13.500a1.500 1.500 0 0 1 3 0M28 24.500a1.400 1.400 0 0 1 2.800 0M37.500 24.500a1.400 1.400 0 0 1 2.800 0"/></g><text x="54.700" y="35.700" font-size="26.500" font-weight="300" font-family="Liberation Sans, Noto Sans CJK SC, sans-serif" fill="#808080">信安之路</text><text x="53.500" y="34.500" font-size="26.500" font-weight="300" font-family="Liberation Sans, Noto Sans CJK SC, sans-serif" fill="#ffffff" stroke="#e6e6e6" stroke-width=".5">信安之路</text></svg>
</div></body></html>
